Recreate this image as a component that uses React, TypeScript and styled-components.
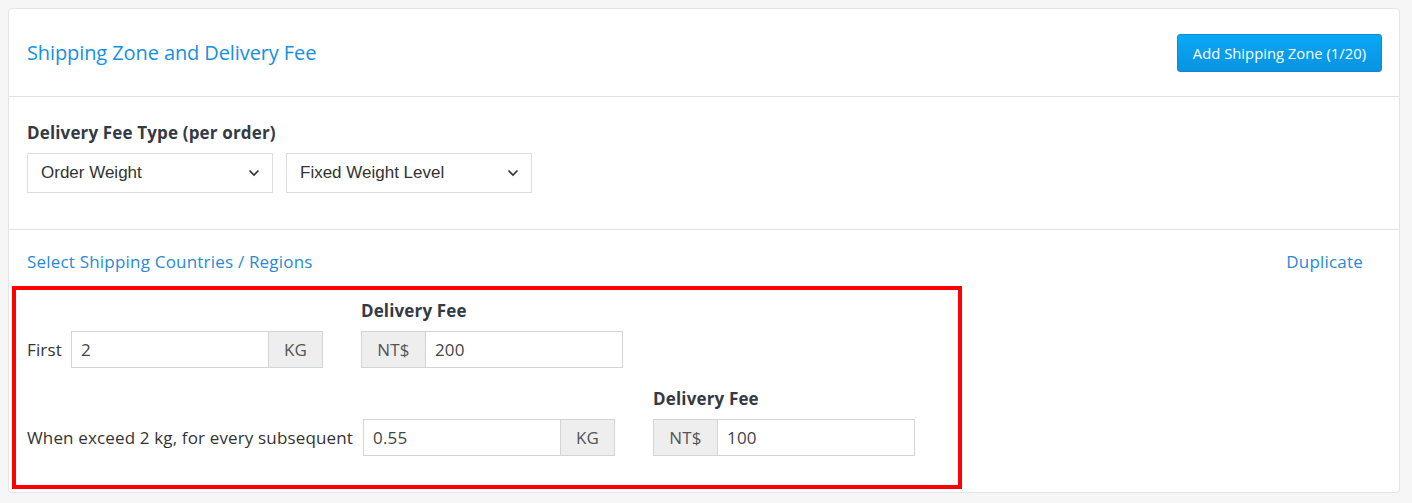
import * as React from 'react';
import styled, { createGlobalStyle } from 'styled-components';

const GlobalStyle = createGlobalStyle`
  html, body {
    margin: 0;
    background: #f6f6f6;
    font-family: "Open Sans", "Liberation Sans", sans-serif;
    letter-spacing: 0.15px;
    color: #333;
  }
  * { box-sizing: border-box; }
`;

const Page = styled.div`
  padding: 8px 12px 10px 8px;
`;

const Card = styled.div`
  background: #fff;
  border: 1px solid #e4e4e4;
  border-radius: 4px;
  height: 485px;
`;

const Header = styled.div`
  height: 88px;
  display: flex;
  align-items: center;
  justify-content: space-between;
  padding: 0 17px 0 18px;
  border-bottom: 1px solid #e2e2e2;
`;

const Title = styled.h2`
  margin: 0;
  font-size: 20px;
  font-weight: 400;
  letter-spacing: -0.1px;
  color: #1590e2;
`;

const PrimaryButton = styled.button`
  height: 38px;
  padding: 0 15px;
  border: 1px solid #0b8bd6;
  border-radius: 3px;
  background: linear-gradient(#08a8f6, #0a93e0);
  color: #fff;
  font-family: "Open Sans", sans-serif;
  font-size: 14.8px;
  letter-spacing: 0;
  cursor: pointer;
`;

const Section = styled.div<{ $divided?: boolean }>`
  padding: ${p => (p.$divided ? '25px 18px 36px' : '21px 18px 0')};
  border-bottom: ${p => (p.$divided ? '1px solid #e2e2e2' : 'none')};
`;

const FieldLabel = styled.div`
  font-size: 17px;
  font-weight: 700;
  line-height: 22px;
  color: #343a43;
`;

const SelectRow = styled.div`
  display: flex;
  gap: 13px;
  margin-top: 9px;
`;

const SelectBox = styled.div`
  width: 246px;
  height: 40px;
  display: flex;
  align-items: center;
  justify-content: space-between;
  padding: 0 12px 0 13px;
  border: 1px solid #ddd;
  font-family: "Liberation Sans", Arial, sans-serif;
  font-size: 17px;
  letter-spacing: 0;
  color: #333;
`;

const LinkRow = styled.div`
  display: flex;
  justify-content: space-between;
  padding-right: 18px;
`;

const TextLink = styled.a`
  font-size: 17px;
  line-height: 22px;
  letter-spacing: 0.2px;
  color: #2a89d4;
  text-decoration: none;
  cursor: pointer;
`;

const Highlight = styled.div`
  width: 950px;
  margin: 13px 0 0 -15px;
  padding: 10px 0 29px 11px;
  border: 4px solid #ff0000;
  display: flex;
  flex-direction: column;
  gap: 20px;
`;

const RuleRow = styled.div<{ $feeGap: number }>`
  display: flex;
  align-items: flex-end;
  gap: ${p => p.$feeGap}px;
`;

const InlineField = styled.div<{ $gap: number }>`
  display: flex;
  align-items: center;
  gap: ${p => p.$gap}px;
  font-size: 17px;
`;

const FeeField = styled.div`
  display: flex;
  flex-direction: column;
  gap: 9px;
`;

const InputGroup = styled.div<{ $width: number }>`
  width: ${p => p.$width}px;
  height: 37px;
  display: flex;
  border: 1px solid #d4d4d4;
`;

const Addon = styled.span<{ $width: number; $side: 'left' | 'right' }>`
  width: ${p => p.$width}px;
  display: flex;
  align-items: center;
  justify-content: center;
  background: #eeeeee;
  color: #555;
  font-size: 17px;
  border-${p => (p.$side === 'left' ? 'right' : 'left')}: 1px solid #d4d4d4;
`;

const Value = styled.span`
  flex: 1;
  display: flex;
  align-items: center;
  padding-left: 9px;
  font-size: 17px;
  color: #444;
`;

const Chevron = () => (
  <svg width="12" height="8" viewBox="0 0 12 8">
    <path d="M1.5 1.5l4.5 4.5 4.5-4.5" fill="none" stroke="#333" strokeWidth="1.6" />
  </svg>
);

const WeightInput = ({ value }: { value: string }) => (
  <InputGroup $width={252}>
    <Value>{value}</Value>
    <Addon $width={54} $side="right">KG</Addon>
  </InputGroup>
);

const FeeInput = ({ value }: { value: string }) => (
  <FeeField>
    <FieldLabel>Delivery Fee</FieldLabel>
    <InputGroup $width={262}>
      <Addon $width={64} $side="left">NT$</Addon>
      <Value>{value}</Value>
    </InputGroup>
  </FeeField>
);

export default function App() {
  return (
    <Page>
      <GlobalStyle />
      <Card>
        <Header>
          <Title>Shipping Zone and Delivery Fee</Title>
          <PrimaryButton>Add Shipping Zone (1/20)</PrimaryButton>
        </Header>

        <Section $divided>
          <FieldLabel>Delivery Fee Type (per order)</FieldLabel>
          <SelectRow>
            <SelectBox>Order Weight<Chevron /></SelectBox>
            <SelectBox>Fixed Weight Level<Chevron /></SelectBox>
          </SelectRow>
        </Section>

        <Section>
          <LinkRow>
            <TextLink>Select Shipping Countries / Regions</TextLink>
            <TextLink>Duplicate</TextLink>
          </LinkRow>

          <Highlight>
            <RuleRow $feeGap={38}>
              <InlineField $gap={9}>
                First
                <WeightInput value="2" />
              </InlineField>
              <FeeInput value="200" />
            </RuleRow>
            <RuleRow $feeGap={38}>
              <InlineField $gap={10}>
                When exceed 2 kg, for every subsequent
                <WeightInput value="0.55" />
              </InlineField>
              <FeeInput value="100" />
            </RuleRow>
          </Highlight>
        </Section>
      </Card>
    </Page>
  );
}
